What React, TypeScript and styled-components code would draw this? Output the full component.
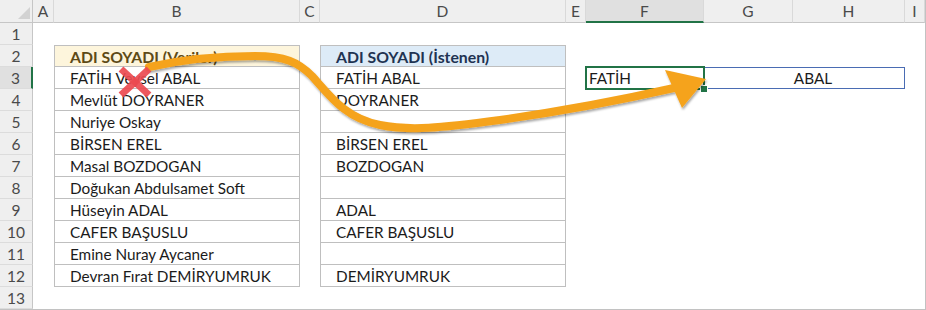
import React from 'react';
import styled, { createGlobalStyle, css } from 'styled-components';

const GlobalStyle = createGlobalStyle`
  html, body {
    margin: 0;
    padding: 0;
    background: #ffffff;
  }
  body {
    font-family: Lato, "Open Sans", "Noto Sans", sans-serif;
  }
`;

const COLS = ['A', 'B', 'C', 'D', 'E', 'F', 'G', 'H', 'I'];
const GREEN = '#217346';

const rows: [string, string][] = [
  ['FATİH Veysel ABAL', 'FATİH ABAL'],
  ['Mevlüt DOYRANER', 'DOYRANER'],
  ['Nuriye Oskay', ''],
  ['BİRSEN EREL', 'BİRSEN EREL'],
  ['Masal BOZDOGAN', 'BOZDOGAN'],
  ['Doğukan Abdulsamet Soft', ''],
  ['Hüseyin ADAL', 'ADAL'],
  ['CAFER BAŞUSLU', 'CAFER BAŞUSLU'],
  ['Emine Nuray Aycaner', ''],
  ['Devran Fırat DEMİRYUMRUK', 'DEMİRYUMRUK'],
];

const Sheet = styled.div`
  position: relative;
  display: grid;
  grid-template-columns: 33px 21px 246px 20px 246px 20px 118px 89px 112px 20px;
  grid-template-rows: 23px repeat(13, 22px);
  width: 925px;
  border-right: 1px solid #c2c2c2;
  border-bottom: 1px solid #c2c2c2;
  background: #ffffff;
  overflow: hidden;
`;

const Corner = styled.div`
  position: relative;
  background: #efefef;
  border-right: 1px solid #c6c6c6;
  border-bottom: 1px solid #c6c6c6;
  box-sizing: border-box;

  &::after {
    content: '';
    position: absolute;
    right: 2px;
    bottom: 3px;
    width: 0;
    height: 0;
    border-left: 12px solid transparent;
    border-bottom: 12px solid #d2d2d2;
  }
`;

const ColHead = styled.div<{ $active?: boolean }>`
  display: flex;
  align-items: center;
  justify-content: center;
  box-sizing: border-box;
  font-size: 15.5px;
  color: #4a4a4a;
  background: ${p => (p.$active ? '#e0e0e0' : '#efefef')};
  border-right: 1px solid #d9d9d9;
  border-bottom: ${p => (p.$active ? `2px solid ${GREEN}` : '1px solid #c6c6c6')};
  padding-top: ${p => (p.$active ? '1px' : '0')};
`;

const RowHead = styled.div<{ $active?: boolean }>`
  display: flex;
  align-items: center;
  justify-content: center;
  box-sizing: border-box;
  font-size: 15.5px;
  color: #4a4a4a;
  background: ${p => (p.$active ? '#e0e0e0' : '#efefef')};
  border-bottom: 1px solid #dcdcdc;
  border-right: ${p => (p.$active ? `2px solid ${GREEN}` : '1px solid #c6c6c6')};
`;

const Cell = styled.div`
  box-sizing: border-box;
`;

type Tone = 'plain' | 'gold' | 'blue';

const toneFill: Record<Tone, string> = {
  plain: '#ffffff',
  gold: '#fdf5dc',
  blue: '#ddebf7',
};

const toneText: Record<Tone, string> = {
  plain: '#1b1b1b',
  gold: '#5e4a16',
  blue: '#1f3352',
};

const TableCell = styled.div<{ $tone: Tone; $top?: boolean }>`
  display: flex;
  align-items: center;
  box-sizing: border-box;
  padding-left: 15px;
  font-size: ${p => (p.$tone === 'plain' ? '15.3px' : '15.8px')};
  white-space: nowrap;
  background: ${p => toneFill[p.$tone]};
  color: ${p => toneText[p.$tone]};
  font-weight: ${p => (p.$tone === 'plain' ? 400 : 700)};
  border-left: 1px solid #bfbfbf;
  border-right: 1px solid #bfbfbf;
  border-bottom: 1px solid #bfbfbf;
  ${p =>
    p.$top &&
    css`
      border-top: 1px solid #bfbfbf;
    `}
`;

const ActiveCell = styled.div`
  position: relative;
  display: flex;
  align-items: center;
  padding-left: 3px;
  font-size: 15.3px;
  color: #1b1b1b;
  outline: 2px solid ${GREEN};
  outline-offset: -1px;
  z-index: 1;
`;

const FillHandle = styled.span`
  position: absolute;
  right: -4px;
  bottom: -4px;
  width: 6px;
  height: 6px;
  background: ${GREEN};
  border: 1px solid #ffffff;
`;

const MergedCell = styled.div`
  grid-column: span 2;
  display: flex;
  align-items: center;
  justify-content: center;
  box-sizing: border-box;
  padding-left: 18px;
  font-size: 15.3px;
  color: #1b1b1b;
  border: 1px solid #4a6cb3;
  border-left: none;
`;

const Overlay = styled.svg`
  position: absolute;
  left: 0;
  top: 0;
  width: 926px;
  height: 310px;
  pointer-events: none;
  z-index: 2;
`;

function Annotations() {
  return (
    <Overlay viewBox="0 0 926 310">
      <defs>
        <filter id="arrowShadow" x="-5%" y="-20%" width="110%" height="140%">
          <feDropShadow dx="1" dy="2" stdDeviation="1.2" floodColor="#000" floodOpacity="0.35" />
        </filter>
      </defs>
      <g filter="url(#arrowShadow)">
        <path
          d="M 149 67 C 180 60, 220 56, 255 56 C 285 56, 298 62, 312 76 C 330 96, 345 118, 380 125 C 410 131, 440 128, 500 120 C 570 110, 630 98, 674 88"
          fill="none"
          stroke="#f5a31d"
          strokeWidth="8"
          strokeLinecap="round"
        />
        <polygon points="665,70 706,79 682,108" fill="#f5a31d" />
      </g>
      <g stroke="#ec4a50" strokeWidth="7" strokeOpacity="0.92" strokeLinecap="butt">
        <line x1="121" y1="69" x2="149" y2="95" />
        <line x1="149" y1="69" x2="121" y2="95" />
      </g>
    </Overlay>
  );
}

function blanks(n: number, key: string) {
  return Array.from({ length: n }, (_, i) => <Cell key={`${key}-${i}`} />);
}

export default function App() {
  return (
    <>
      <GlobalStyle />
      <Sheet>
        <Corner />
        {COLS.map(c => (
          <ColHead key={c} $active={c === 'F'}>
            {c}
          </ColHead>
        ))}

        <RowHead>1</RowHead>
        {blanks(9, 'r1')}

        <RowHead>2</RowHead>
        <Cell />
        <TableCell $tone="gold" $top>
          ADI SOYADI (Veriler)
        </TableCell>
        <Cell />
        <TableCell $tone="blue" $top>
          ADI SOYADI (İstenen)
        </TableCell>
        {blanks(5, 'r2')}

        {rows.map(([source, wanted], i) => {
          const n = i + 3;
          const first = n === 3;
          return (
            <React.Fragment key={n}>
              <RowHead $active={first}>{n}</RowHead>
              <Cell />
              <TableCell $tone="plain">{source}</TableCell>
              <Cell />
              <TableCell $tone="plain">{wanted}</TableCell>
              <Cell />
              {first ? (
                <>
                  <ActiveCell>
                    FATİH
                    <FillHandle />
                  </ActiveCell>
                  <MergedCell>ABAL</MergedCell>
                  <Cell />
                </>
              ) : (
                blanks(4, `r${n}`)
              )}
            </React.Fragment>
          );
        })}

        <RowHead>13</RowHead>
        {blanks(9, 'r13')}

        <Annotations />
      </Sheet>
    </>
  );
}
